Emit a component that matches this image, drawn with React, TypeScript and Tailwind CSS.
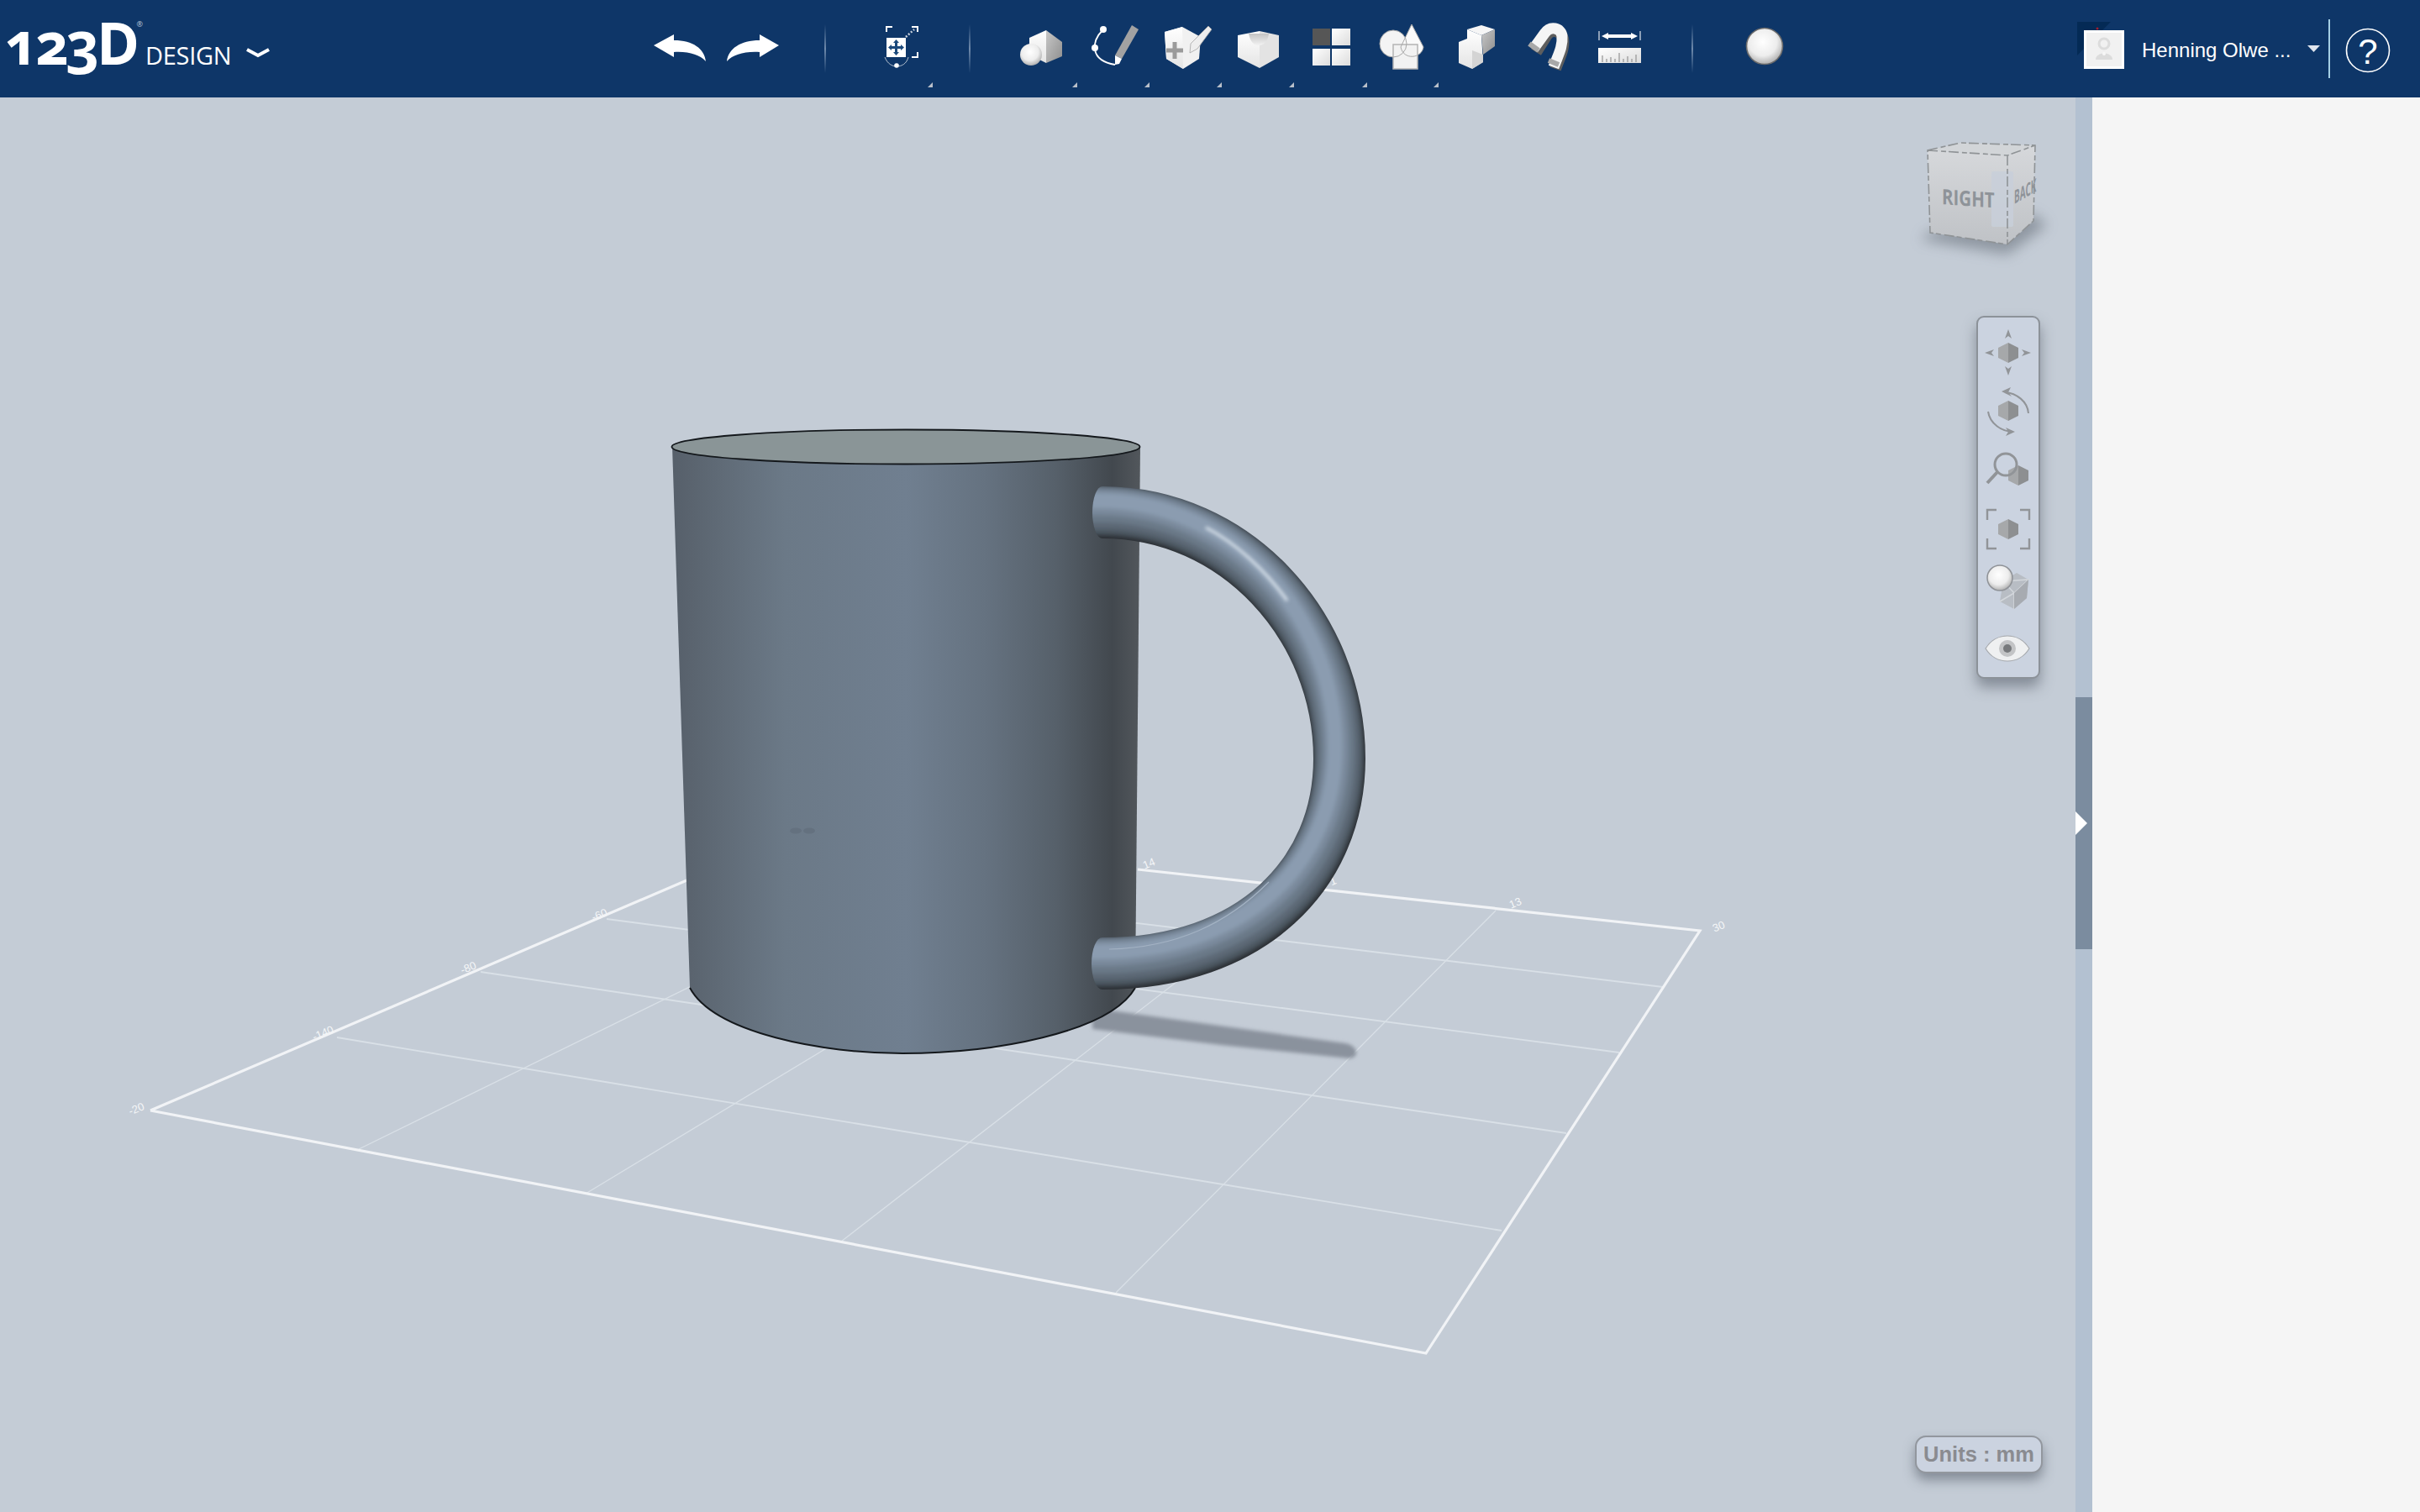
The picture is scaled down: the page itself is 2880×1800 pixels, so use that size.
import React from 'react';

type SlotProps = {
  x: number;
  w: number;
  caret?: number;
  className?: string;
  children?: React.ReactNode;
};

// every toolbar icon is drawn in page coordinates, the viewBox just windows onto it
const Slot: React.FC<SlotProps> = ({ x, w, caret, className, children }) => (
  <svg width={w} height={116} viewBox={`${x} 0 ${w} 116`} className={`shrink-0 ${className ?? ''}`}>
    {children}
    {caret !== undefined && (
      <polygon points={`${caret + 3},98 ${caret + 3},104 ${caret - 3},104`} fill="#b9c0ca" />
    )}
  </svg>
);

const Divider: React.FC<{ className?: string }> = ({ className }) => (
  <div className={`w-[2px] h-[58px] shrink-0 bg-gradient-to-b from-transparent via-[#6f8aab] to-transparent ${className ?? ''}`} />
);

const Hex: React.FC<{ cx: number; cy: number; r?: number }> = ({ cx, cy, r = 12 }) => (
  <g>
    <polygon points={`${cx},${cy - r} ${cx - r},${cy - r / 2} ${cx - r},${cy + r / 2} ${cx},${cy + r}`} fill="#a6a8aa" />
    <polygon points={`${cx},${cy - r} ${cx + r},${cy - r / 2} ${cx + r},${cy + r / 2} ${cx},${cy + r}`} fill="#8d8f91" />
  </g>
);

const NavIcon: React.FC<{ y: number; h: number; children: React.ReactNode }> = ({ y, h, children }) => (
  <svg width={72} height={h} viewBox={`2354 ${y} 72 ${h}`} className="shrink-0">
    {children}
  </svg>
);

const HeaderDefs = () => (
  <svg width={0} height={0} className="absolute">
    <defs>
      <linearGradient id="whiteFace" x1="0" y1="0" x2="0" y2="1">
        <stop offset="0" stopColor="#ffffff" />
        <stop offset="1" stopColor="#e4e4e4" />
      </linearGradient>
      <linearGradient id="grayFace" x1="0" y1="0" x2="1" y2="1">
        <stop offset="0" stopColor="#c8c8c8" />
        <stop offset="1" stopColor="#8e8e8e" />
      </linearGradient>
      <linearGradient id="dish" x1="0" y1="0" x2="0" y2="1">
        <stop offset="0" stopColor="#c4c4c4" />
        <stop offset="1" stopColor="#f2f2f2" />
      </linearGradient>
      <radialGradient id="ball" cx="0.45" cy="0.38" r="0.65">
        <stop offset="0" stopColor="#ffffff" />
        <stop offset="0.6" stopColor="#ededed" />
        <stop offset="1" stopColor="#a9a9a9" />
      </radialGradient>
      <linearGradient id="paneSquare" x1="0" y1="0" x2="1" y2="1">
        <stop offset="0" stopColor="#ffffff" />
        <stop offset="1" stopColor="#dcdcdc" />
      </linearGradient>
    </defs>
  </svg>
);

const Logo = () => (
  <div className="w-[340px] h-[116px] shrink-0 flex items-baseline pl-[6px] pt-[16px] text-white font-['Open_Sans',sans-serif] leading-none">
    <span className="text-[69px] font-bold tracking-[-3.5px] [font-feature-settings:'onum']">123D</span>
    <span className="text-[9px] self-start mt-[8px] text-[#b7c6d8]">®</span>
    <span className="text-[29px] ml-[3px] tracking-[-0.3px]">DESIGN</span>
    <svg width={30} height={12} viewBox="0 0 30 12" className="ml-[17px] self-start mt-[41px] shrink-0">
      <path d="M2 2 L15 9 L28 2" stroke="#fff" strokeWidth={4} fill="none" />
    </svg>
  </div>
);

const Header = () => (
  <header className="h-[116px] shrink-0 flex items-center bg-[#0e3668]">
    <HeaderDefs />
    <Logo />

    <Slot x={770} w={170} className="ml-[430px]">
      <path d="M778 54 L802 41 V48 C825 48 838 58 840 73 C832 65 820 61 802 62 V68 Z" fill="#fff" />
      <path d="M927 54 L904 41 V48 C881 48 867 58 865 73 C873 65 885 61 904 62 V68 Z" fill="#fff" />
    </Slot>
    <Divider className="ml-[41px]" />

    {/* transform */}
    <Slot x={1040} w={72} caret={1107} className="ml-[57px]">
      <path d="M1055 38 V32 H1062 M1085 32 H1092 V38 M1092 62 V68 H1085" stroke="#fff" strokeWidth={2} fill="none" />
      <path d="M1078 44 L1088 35" stroke="#c9d2dd" strokeWidth={2.5} strokeDasharray="2 2" />
      <rect x={1055} y={45} width={23} height={23} fill="#fff" />
      <path d="M1066.5 47 L1070 51 H1068 V55 H1072 V53 L1076 56.5 L1072 60 V58 H1068 V62 H1070 L1066.5 66 L1063 62 H1065 V58 H1061 V60 L1057 56.5 L1061 53 V55 H1065 V51 H1063 Z" fill="#1c4a7c" />
      <path d="M1053 68 C1056 76 1062 79 1067 79 C1073 79 1079 76 1081 68" stroke="#b6c2d0" strokeWidth={1} fill="none" />
      <circle cx={1067} cy={78} r={2.8} fill="#fff" />
    </Slot>
    <Divider className="ml-[41px]" />

    {/* primitives */}
    <Slot x={1200} w={85} caret={1279} className="ml-[45px]">
      <polygon points="1225,45 1245,36 1245,75 1225,65" fill="url(#whiteFace)" />
      <polygon points="1245,36 1264,50 1264,67 1245,75" fill="url(#grayFace)" />
      <circle cx={1227} cy={65} r={13} fill="url(#ball)" />
    </Slot>
    {/* sketch */}
    <Slot x={1285} w={86} caret={1365}>
      <path d="M1313 35 C1298 50 1297 72 1327 77" stroke="#fff" strokeWidth={1.8} fill="none" />
      <circle cx={1313} cy={35} r={4} fill="#fff" />
      <circle cx={1303} cy={57} r={4} fill="#fff" />
      <polygon points="1347,30 1355,35 1335,70 1327,66" fill="#a2a2a2" />
      <polygon points="1327,66 1335,70 1332,76 1327,77" fill="#fff" />
    </Slot>
    {/* construct */}
    <Slot x={1371} w={86} caret={1451}>
      <polygon points="1386,38 1407,32 1429,44 1427,70 1408,82 1388,70" fill="#f1f1f1" />
      <polygon points="1386,38 1407,32 1408,82 1388,70" fill="url(#whiteFace)" />
      <path d="M1398 50 V70 M1388 60 H1408" stroke="#9b9b9b" strokeWidth={5} />
      <polygon points="1438,31 1442,35 1425,58 1416,63 1417,52" fill="#eeeeee" stroke="#a6a6a6" strokeWidth={0.8} />
    </Slot>
    {/* modify */}
    <Slot x={1457} w={86} caret={1537}>
      <polygon points="1473,42 1499,37 1499,81 1473,68" fill="url(#whiteFace)" />
      <polygon points="1499,37 1522,42 1522,68 1499,81" fill="#e3e3e3" />
      <path d="M1486 40 C1488 50 1492 54 1498 54 C1505 54 1509 48 1510 40 Z" fill="url(#dish)" />
    </Slot>
    {/* pattern */}
    <Slot x={1543} w={87} caret={1624}>
      <rect x={1562} y={34} width={21} height={20} fill="#565656" />
      <rect x={1585} y={34} width={22} height={20} fill="url(#paneSquare)" />
      <rect x={1562} y={58} width={21} height={20} fill="url(#paneSquare)" />
      <rect x={1585} y={58} width={22} height={20} fill="url(#paneSquare)" />
    </Slot>
    {/* grouping */}
    <Slot x={1630} w={85} caret={1709}>
      <ellipse cx={1658} cy={52} rx={16} ry={16} fill="#f4f4f4" />
      <path d="M1680 29 L1694 56 C1692 70 1670 72 1667 56 Z" fill="#fafafa" />
      <rect x={1658} y={53} width={29} height={29} fill="#f2f2f2" stroke="#b4b4b4" strokeWidth={1.5} />
      <ellipse cx={1658} cy={52} rx={16} ry={16} fill="none" stroke="#a9a9a9" strokeWidth={1} />
      <path d="M1680 29 L1694 56 C1692 70 1670 72 1667 56 Z" fill="none" stroke="#a9a9a9" strokeWidth={1} />
    </Slot>
    {/* combine */}
    <Slot x={1715} w={85}>
      <polygon points="1736,50 1746,46 1746,35 1763,42 1765,74 1752,82 1736,75" fill="url(#whiteFace)" />
      <polygon points="1746,35 1763,30 1779,35 1763,42" fill="#f6f6f6" />
      <polygon points="1763,42 1779,35 1779,55 1765,65" fill="url(#grayFace)" />
      <polygon points="1752,60 1765,65 1765,74 1752,82" fill="#d4d4d4" />
    </Slot>
    {/* snap */}
    <Slot x={1800} w={85}>
      <path d="M1828 62 L1840 43 C1846 33 1858 36 1860 46 C1862 58 1856 68 1851 82" stroke="#5e5e5e" strokeWidth={14} fill="none" />
      <path d="M1825 58 L1838 40 C1845 30 1858 33 1859 43 C1860 56 1854 66 1849 80" stroke="#f5f5f5" strokeWidth={13} fill="none" />
      <path d="M1820 52 L1831 60 M1843 72 L1855 77" stroke="#a8a8a8" strokeWidth={6} fill="none" />
    </Slot>
    {/* measure */}
    <Slot x={1885} w={85}>
      <path d="M1903 37 V48 M1952 37 V48" stroke="#dfe5ec" strokeWidth={1.2} />
      <path d="M1914 39 L1906 43 L1914 47 V45 H1941 V47 L1949 43 L1941 39 V41 H1914 Z" fill="#fff" />
      <rect x={1902} y={57} width={51} height={18} fill="url(#paneSquare)" />
      <path d="M1907 74 V66 M1912 74 V70 M1917 74 V68 M1922 74 V70 M1927 74 V63 M1932 74 V70 M1937 74 V67 M1942 74 V70 M1947 74 V65" stroke="#9a9a9a" strokeWidth={1.3} />
    </Slot>
    <Divider className="ml-[43px]" />

    <Slot x={2070} w={60} className="ml-[55px]">
      <circle cx={2100} cy={55} r={21.5} fill="url(#ball)" stroke="#6b6b6b" strokeWidth={1.6} />
    </Slot>

    <div className="ml-auto flex items-center h-[116px]">
      <svg width={62} height={116} viewBox="2470 0 62 116" className="shrink-0">
        <polygon points="2472,26 2512,26 2472,66" fill="#042a55" />
        <circle cx={2496} cy={34} r={1.5} fill="#a11d2e" />
        <rect x={2480} y={36} width={48} height={46} fill="#ffffff" />
        <rect x={2483} y={39} width={42} height={40} fill="#f1f1f1" />
        <circle cx={2504} cy={52} r={6} fill="none" stroke="#dcdcdc" strokeWidth={3} />
        <path d="M2494 71 C2494 61 2514 61 2514 71 Z" fill="#dcdcdc" />
        <circle cx={2504} cy={64} r={2} fill="#f7f7f7" />
      </svg>
      <span className="ml-[17px] mt-[3px] w-[197px] text-[24px] leading-none text-white whitespace-nowrap font-['Liberation_Sans',sans-serif]">
        Henning Olwe ...
      </span>
      <svg width={15} height={8} viewBox="0 0 15 8" className="shrink-0">
        <polygon points="0,0 15,0 7.5,8" fill="#dfe5ee" />
      </svg>
      <div className="ml-[10px] w-[2px] h-[70px] bg-[#a4cfe4] shrink-0" />
      <svg width={107} height={116} viewBox="2773 0 107 116" className="shrink-0">
        <circle cx={2818} cy={60} r={25.5} fill="none" stroke="#fff" strokeWidth={1.6} />
        <text x={2818} y={76} textAnchor="middle" fontSize={42} fill="#fff" fontFamily="Liberation Sans, sans-serif">?</text>
      </svg>
    </div>
  </header>
);

const GridPlane = () => {
  const labels: [number, number, string][] = [
    [164, 1324, '-20'],
    [386, 1234, '-140'],
    [559, 1156, '-80'],
    [715, 1093, '-60'],
    [1369, 1032, '14'],
    [1588, 1053, '1'],
    [1805, 1079, '13'],
    [2047, 1107, '30'],
  ];
  return (
    <g>
      <g stroke="#d9e0e7" strokeWidth={1.9}>
        <line x1={843} y1={1037} x2={1979} y2={1175} />
        <line x1={722} y1={1094} x2={1927} y2={1253} />
        <line x1={572} y1={1157} x2={1864} y2={1349} />
        <line x1={401} y1={1235} x2={1787} y2={1465} />
        <line x1={427} y1={1368} x2={900} y2={1136} strokeWidth={1.3} />
        <line x1={697} y1={1421} x2={1000} y2={1238} strokeWidth={1.3} />
        <line x1={1001} y1={1478} x2={1546} y2={1056} strokeWidth={1.3} />
        <line x1={1328} y1={1539} x2={1780} y2={1084} strokeWidth={1.3} />
      </g>
      <path d="M179 1322 L950 991 M179 1322 L1697 1611 L2023 1108 L1354 1035" stroke="#f1f3f6" strokeWidth={3.2} fill="none" />
      {labels.map(([x, y, t]) => (
        <text key={t} x={x} y={y} fontSize={13} fill="#f4f6f8" textAnchor="middle" fontFamily="Liberation Sans, sans-serif" transform={`rotate(-22 ${x} ${y})`}>
          {t}
        </text>
      ))}
    </g>
  );
};

const TUBE = 'M1312 610 C1470 610 1594 745 1594 903 C1594 1040 1490 1147 1312 1147';
const TUBE_LONG = 'M1250 610 H1312 C1470 610 1594 745 1594 903 C1594 1040 1490 1147 1312 1147 H1250';

const Mug = () => (
  <g>
    <defs>
      <linearGradient id="mugBody" gradientUnits="userSpaceOnUse" x1="800" y1="0" x2="1357" y2="0">
        <stop offset="0" stopColor="#565f6a" />
        <stop offset="0.05" stopColor="#5b6570" />
        <stop offset="0.24" stopColor="#6b7987" />
        <stop offset="0.5" stopColor="#707f90" />
        <stop offset="0.67" stopColor="#657280" />
        <stop offset="0.82" stopColor="#56606a" />
        <stop offset="0.94" stopColor="#42484e" />
        <stop offset="1" stopColor="#52575c" />
      </linearGradient>
      <filter id="soft" x="-10%" y="-10%" width="120%" height="120%">
        <feGaussianBlur stdDeviation="2.5" />
      </filter>
      <filter id="softer" x="-10%" y="-30%" width="120%" height="160%">
        <feGaussianBlur stdDeviation="2" />
      </filter>
      <mask id="tubeMask" maskUnits="userSpaceOnUse" x="1250" y="540" width="420" height="680">
        <path d={TUBE} stroke="#fff" strokeWidth={62} fill="none" />
        <ellipse cx={1312} cy={610} rx={12} ry={31} fill="#fff" />
        <ellipse cx={1312} cy={1147} rx={13} ry={31} fill="#fff" />
      </mask>
    </defs>

    <path d="M1300 1200 L1351 1207 L1601 1242 C1614 1244 1620 1258 1606 1260 L1453 1244 L1300 1225 Z" fill="#8a929d" filter="url(#softer)" />

    <path d="M800 531 L821 1176 C850 1230 980 1254 1074 1254 C1180 1254 1320 1230 1351 1176 L1357 531 Z" fill="url(#mugBody)" />
    <path d="M821 1176 C850 1230 980 1254 1074 1254 C1180 1254 1320 1230 1351 1176" stroke="#14181c" strokeWidth={2} fill="none" />
    <ellipse cx={1078} cy={532} rx={278.5} ry={20.5} fill="#8a9597" stroke="#14181c" strokeWidth={1.8} />
    <ellipse cx={947} cy={989} rx={7} ry={3.5} fill="#64717f" />
    <ellipse cx={963} cy={989} rx={7} ry={3.5} fill="#64717f" />

    <g mask="url(#tubeMask)">
      <rect x={1250} y={540} width={420} height={680} fill="#2c3035" />
      <g fill="none" filter="url(#soft)">
        <path d={TUBE_LONG} stroke="#4b5660" strokeWidth={60} transform="translate(-1 -3)" />
        <path d={TUBE_LONG} stroke="#5c6875" strokeWidth={52} transform="translate(-2 -6)" />
        <path d={TUBE_LONG} stroke="#6b7988" strokeWidth={42} transform="translate(-3 -9)" />
        <path d={TUBE_LONG} stroke="#7a8a9c" strokeWidth={30} transform="translate(-4 -12)" />
        <path d={TUBE_LONG} stroke="#8b9cb0" strokeWidth={18} transform="translate(-5 -14)" />
      </g>
      <path d="M1435 628 C1470 646 1505 678 1532 715" stroke="#e4edf5" strokeWidth={3} fill="none" filter="url(#softer)" />
      <path d="M1320 1130 C1400 1128 1460 1100 1510 1050" stroke="#a3b2c3" strokeWidth={1.2} fill="none" />
    </g>
  </g>
);

const ViewCube = () => (
  <svg width={180} height={170} viewBox="2270 150 180 170" className="absolute left-[2270px] top-[34px]">
    <defs>
      <linearGradient id="cubeFront" x1="0" y1="0" x2="0" y2="1">
        <stop offset="0" stopColor="#d6d8db" />
        <stop offset="1" stopColor="#bfc2c6" />
      </linearGradient>
      <filter id="cubeShadow" x="-30%" y="-60%" width="160%" height="220%">
        <feGaussianBlur stdDeviation="8" />
      </filter>
    </defs>
    <path d="M2285 285 L2389 303 L2436 268 L2420 255 L2300 275 Z" fill="#626a75" opacity={0.55} filter="url(#cubeShadow)" />
    <polygon points="2294,179 2333,170 2422,173 2389,185" fill="#d2d5d8" />
    <polygon points="2294,179 2389,185 2389,291 2297,277" fill="url(#cubeFront)" />
    <polygon points="2389,185 2422,173 2420,263 2389,291" fill="url(#cubeFront)" />
    <rect x={2370} y={204} width={26} height={66} rx={2} fill="#c8cfd9" opacity={0.85} />
    <path d="M2294 179 L2333 170 L2422 173 L2420 263 L2389 291 L2297 277 Z M2294 179 L2389 185 L2422 173 M2389 185 V291" fill="none" stroke="#8f9396" strokeWidth={1.6} strokeDasharray="12 4 6 3" />
    <text x={0} y={0} fontSize={25} fontWeight={700} fill="#8e9399" fontFamily="Open Sans, sans-serif" transform="translate(2311 243) skewY(4) scale(0.82 1)">RIGHT</text>
    <text x={0} y={0} fontSize={22} fontWeight={700} fill="#8e9399" fontFamily="Open Sans, sans-serif" transform="translate(2397 243) skewY(-30) scale(0.45 1)">BACK</text>
  </svg>
);

const NavBar = () => (
  <div className="absolute left-[2352px] top-[260px] w-[76px] h-[432px] flex flex-col rounded-[9px] border-2 border-[#8c9299] bg-[#cbd3e0] shadow-[0_10px_16px_rgba(70,78,90,0.5)]">
    <NavIcon y={378} h={77}>
      <Hex cx={2390} cy={420} />
      <g fill="#919498">
        <polygon points="2390,392 2394,403 2390,400 2386,403" />
        <polygon points="2390,447 2394,436 2390,439 2386,436" />
        <polygon points="2362,420 2373,416 2370,420 2373,424" />
        <polygon points="2417,420 2406,416 2409,420 2406,424" />
      </g>
    </NavIcon>
    <NavIcon y={455} h={70}>
      <Hex cx={2390} cy={489} />
      <path d="M2386 467 C2400 468 2413 478 2414 492 M2366 490 C2368 504 2382 514 2396 514" stroke="#919498" strokeWidth={2} fill="none" />
      <polygon points="2382,466 2393,461 2390,467 2394,472" fill="#919498" />
      <polygon points="2398,514 2387,509 2390,514 2387,519" fill="#919498" />
    </NavIcon>
    <NavIcon y={525} h={70}>
      <Hex cx={2402} cy={566} />
      <circle cx={2387} cy={553} r={13} fill="none" stroke="#919498" strokeWidth={3} />
      <path d="M2377 562 L2365 575" stroke="#919498" strokeWidth={4} />
    </NavIcon>
    <NavIcon y={595} h={67}>
      <Hex cx={2390} cy={630} />
      <path d="M2365 619 V607 H2376 M2404 607 H2415 V619 M2365 641 V653 H2376 M2404 653 H2415 V641" stroke="#919498" strokeWidth={2.4} fill="none" />
    </NavIcon>
    <NavIcon y={662} h={73}>
      <polygon points="2384,692 2400,682 2414,690 2412,712 2397,725 2380,716" fill="#b8bdc4" />
      <path d="M2384 692 L2414 690 L2397 706 Z M2397 706 V725 M2380 716 L2397 706" stroke="#d3d7dc" strokeWidth={1.5} fill="none" />
      <polygon points="2397,706 2414,690 2412,712 2397,725" fill="#a7abb1" />
      <circle cx={2380} cy={688} r={15} fill="url(#ball)" stroke="#8f9297" strokeWidth={1.5} />
    </NavIcon>
    <NavIcon y={735} h={69}>
      <path d="M2363 772 C2375 752 2403 752 2415 772 C2403 792 2375 792 2363 772 Z" fill="#eff0f1" stroke="#a6a9ad" strokeWidth={1.2} />
      <circle cx={2389} cy={772} r={10} fill="#c3c4c6" />
      <circle cx={2389} cy={772} r={5} fill="#77797c" />
    </NavIcon>
  </div>
);

export default function App() {
  return (
    <div className="w-[2880px] h-[1800px] flex flex-col overflow-hidden bg-[#f5f5f5] font-['Liberation_Sans',sans-serif]">
      <Header />
      <div className="flex flex-1 min-h-0">
        <main className="relative w-[2470px] shrink-0 bg-[#c4ccd6]">
          <svg width={2470} height={1684} viewBox="0 116 2470 1684">
            <GridPlane />
            <Mug />
          </svg>
          <ViewCube />
          <NavBar />
          <div className="absolute left-[2279px] top-[1593px] w-[152px] h-[45px] flex items-center justify-center rounded-[13px] border-2 border-[#92979e] bg-[#cbd3e0] text-[25.5px] leading-none font-bold text-[#8a8b90] shadow-[0_8px_14px_rgba(70,78,90,0.5)]">
            Units : mm
          </div>
        </main>
        <div className="w-[20px] shrink-0 bg-[#b3c1d1]">
          <div className="mt-[714px] h-[300px] flex items-center bg-[#7b8c9f]">
            <svg width={14} height={28} viewBox="0 0 14 28">
              <polygon points="0,0 14,14 0,28" fill="#fff" />
            </svg>
          </div>
        </div>
        <aside className="flex-1 bg-[#f5f5f5]" />
      </div>
    </div>
  );
}
